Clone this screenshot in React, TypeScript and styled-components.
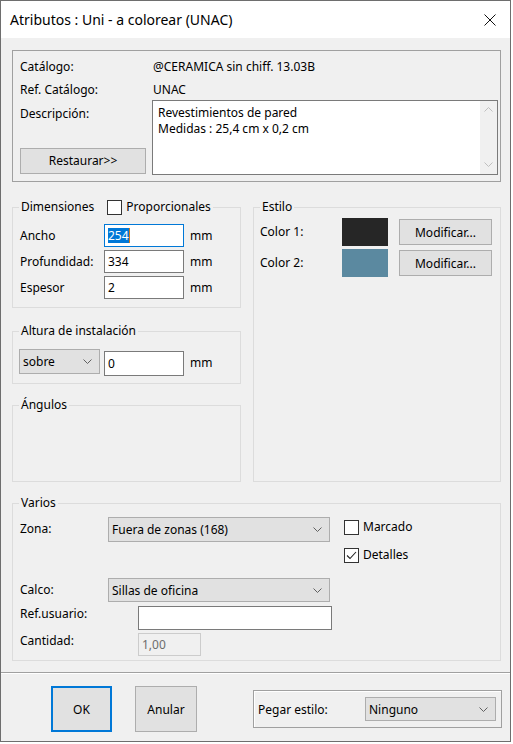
import styled, { createGlobalStyle } from "styled-components";

const GlobalStyle = createGlobalStyle`
  html, body { margin: 0; padding: 0; background: #ffffff; }
  body {
    font-family: "Segoe UI", "Noto Sans", "Open Sans", sans-serif;
    font-size: 12px;
    color: #000;
  }
  * { box-sizing: border-box; }
`;

const Chevron = ({ up }: { up?: boolean }) => (
  <svg width="9" height="5" viewBox="0 0 9 5">
    <path
      d={up ? "M0.5 4.5 L4.5 0.5 L8.5 4.5" : "M0.5 0.5 L4.5 4.5 L8.5 0.5"}
      fill="none"
      stroke="currentColor"
      strokeWidth="1"
    />
  </svg>
);

const CheckBox = ({ checked }: { checked?: boolean }) => (
  <Box>
    {checked && (
      <svg width="13" height="13" viewBox="0 0 13 13">
        <path d="M2 6.5 L5 9.5 L11 3" fill="none" stroke="#222" strokeWidth="1.1" />
      </svg>
    )}
  </Box>
);

const DropDown = ({ text, w, h }: { text: string; w: number; h: number }) => (
  <Select $w={w} $h={h}>
    <span>{text}</span>
    <Chevron />
  </Select>
);

export default function App() {
  return (
    <>
      <GlobalStyle />
      <Window>
        <TitleBar>
          <Title>Atributos : Uni - a colorear (UNAC)</Title>
          <svg width="12" height="12" viewBox="0 0 12 12">
            <path d="M0.5 0.5 L11.5 11.5 M11.5 0.5 L0.5 11.5" stroke="#111" strokeWidth="1" />
          </svg>
        </TitleBar>

        <Body>
          <InfoFrame>
            <InfoRow>
              <InfoLabel>Catálogo:</InfoLabel>
              <InfoValue>@CERAMICA sin chiff. 13.03B</InfoValue>
            </InfoRow>
            <InfoRow $gap={7}>
              <InfoLabel>Ref. Catálogo:</InfoLabel>
              <InfoValue>UNAC</InfoValue>
            </InfoRow>
            <DescRow>
              <DescLeft>
                <span>Descripción:</span>
                <Button $w={126} $h={26}>Restaurar&gt;&gt;</Button>
              </DescLeft>
              <TextArea>
                <TextContent>
                  Revestimientos de pared
                  <br />
                  Medidas : 25,4 cm x 0,2 cm
                </TextContent>
                <ScrollBar>
                  <Chevron up />
                  <Chevron />
                </ScrollBar>
              </TextArea>
            </DescRow>
          </InfoFrame>

          <Columns>
            <LeftColumn>
              <Group>
                <Legend>
                  Dimensiones
                  <LegendCheck>
                    <CheckBox />
                    <span>Proporcionales</span>
                  </LegendCheck>
                </Legend>
                <DimsContent>
                  <FieldRow>
                    <RowLabel $w={84}>Ancho</RowLabel>
                    <Field $w={80} $h={23} $focused>
                      <Selected>254</Selected>
                      <Caret />
                    </Field>
                    <Unit>mm</Unit>
                  </FieldRow>
                  <FieldRow>
                    <RowLabel $w={84}>Profundidad:</RowLabel>
                    <Field $w={80} $h={23}>334</Field>
                    <Unit>mm</Unit>
                  </FieldRow>
                  <FieldRow>
                    <RowLabel $w={84}>Espesor</RowLabel>
                    <Field $w={80} $h={23}>2</Field>
                    <Unit>mm</Unit>
                  </FieldRow>
                </DimsContent>
              </Group>

              <Group $top={15}>
                <Legend>Altura de instalación</Legend>
                <HeightContent>
                  <DropDown text="sobre" w={81} h={25} />
                  <HeightField $w={80} $h={25}>0</HeightField>
                  <Unit $top={6}>mm</Unit>
                </HeightContent>
              </Group>

              <Group $top={13} $height={85}>
                <Legend>Ángulos</Legend>
              </Group>
            </LeftColumn>

            <RightColumn>
              <Group $grow>
                <Legend>Estilo</Legend>
                <StyleContent>
                  <ColorRow>
                    <RowLabel $w={82}>Color 1:</RowLabel>
                    <Swatch $color="#262626" />
                    <Button $w={93} $h={26}>Modificar...</Button>
                  </ColorRow>
                  <ColorRow>
                    <RowLabel $w={82}>Color 2:</RowLabel>
                    <Swatch $color="#5b89a0" />
                    <Button $w={93} $h={26}>Modificar...</Button>
                  </ColorRow>
                </StyleContent>
              </Group>
            </RightColumn>
          </Columns>

          <Group $top={13}>
            <Legend>Varios</Legend>
            <MiscContent>
              <ZoneRow>
                <RowLabel $w={88}>Zona:</RowLabel>
                <DropDown text="Fuera de zonas (168)" w={222} h={25} />
                <Checks>
                  <CheckLine>
                    <CheckBox />
                    <span>Marcado</span>
                  </CheckLine>
                  <CheckLine>
                    <CheckBox checked />
                    <span>Detalles</span>
                  </CheckLine>
                </Checks>
              </ZoneRow>
              <MiscRow $top={15}>
                <RowLabel $w={88}>Calco:</RowLabel>
                <DropDown text="Sillas de oficina" w={222} h={24} />
              </MiscRow>
              <MiscRow $top={4} $start>
                <RowLabel $w={118}>Ref.usuario:</RowLabel>
                <Field $w={194} $h={24} />
              </MiscRow>
              <MiscRow $top={3} $start>
                <RowLabel $w={118}>Cantidad:</RowLabel>
                <Field $w={63} $h={23} $disabled>1,00</Field>
              </MiscRow>
            </MiscContent>
          </Group>
        </Body>

        <Footer>
          <Button $w={61} $h={46} $default>OK</Button>
          <Button $w={62} $h={46} $left={23}>Anular</Button>
          <PasteBox>
            <PasteLabel>Pegar estilo:</PasteLabel>
            <DropDown text="Ninguno" w={131} h={24} />
          </PasteBox>
        </Footer>
      </Window>
    </>
  );
}

const Window = styled.div`
  width: 511px;
  height: 742px;
  border: 1px solid #6e6e6e;
  background: #f0f0f0;
  display: flex;
  flex-direction: column;
`;

const TitleBar = styled.div`
  height: 37px;
  flex-shrink: 0;
  background: #ffffff;
  display: flex;
  align-items: center;
  justify-content: space-between;
  padding: 0 14px 0 9px;
`;

const Title = styled.div`
  font-size: 14px;
  color: #000;
`;

const Body = styled.div`
  padding: 12px 9px 0 11px;
  display: flex;
  flex-direction: column;
`;

const InfoFrame = styled.div`
  height: 132px;
  border: 1px solid #a0a0a0;
  padding: 8px 2px 6px 7px;
  display: flex;
  flex-direction: column;
`;

const InfoRow = styled.div<{ $gap?: number }>`
  display: flex;
  line-height: 16px;
  margin-top: ${({ $gap }) => $gap ?? 0}px;
`;

const InfoLabel = styled.div`
  width: 132px;
  flex-shrink: 0;
`;

const InfoValue = styled.div`
  padding-left: 1px;
`;

const DescRow = styled.div`
  display: flex;
  margin-top: 2px;
  height: 76px;
`;

const DescLeft = styled.div`
  width: 132px;
  flex-shrink: 0;
  display: flex;
  flex-direction: column;
  justify-content: space-between;
  align-items: flex-start;
  padding: 6px 0 1px 0;
  line-height: 16px;
`;

const TextArea = styled.div`
  flex: 1;
  display: flex;
  background: #ffffff;
  border: 1px solid #7a7a7a;
`;

const TextContent = styled.div`
  flex: 1;
  padding: 4px 5px;
  line-height: 16px;
`;

const ScrollBar = styled.div`
  width: 17px;
  background: #f0f0f0;
  display: flex;
  flex-direction: column;
  justify-content: space-between;
  align-items: center;
  padding: 6px 0 7px;
  color: #bfbfbf;
`;

const Button = styled.div<{ $w: number; $h: number; $default?: boolean; $left?: number }>`
  width: ${({ $w }) => $w}px;
  height: ${({ $h }) => $h}px;
  margin-left: ${({ $left }) => $left ?? 0}px;
  flex-shrink: 0;
  background: #e1e1e1;
  border: ${({ $default }) => ($default ? "2px solid #0078d7" : "1px solid #adadad")};
  display: flex;
  align-items: center;
  justify-content: center;
`;

const Columns = styled.div`
  display: flex;
  gap: 12px;
  margin-top: 17px;
`;

const LeftColumn = styled.div`
  width: 229px;
  flex-shrink: 0;
  display: flex;
  flex-direction: column;
`;

const RightColumn = styled.div`
  flex: 1;
  display: flex;
  flex-direction: column;
`;

const Group = styled.fieldset<{ $top?: number; $grow?: boolean; $height?: number }>`
  margin: ${({ $top }) => $top ?? 0}px 0 0 0;
  padding: 0;
  min-width: 0;
  border: 1px solid #dcdcdc;
  flex: ${({ $grow }) => ($grow ? 1 : "none")};
  height: ${({ $height }) => ($height ? `${$height}px` : "auto")};
`;

const Legend = styled.legend`
  margin-left: 6px;
  padding: 0 2px;
  line-height: 16px;
  display: flex;
  align-items: center;
`;

const LegendCheck = styled.span`
  display: flex;
  align-items: center;
  gap: 4px;
  margin-left: 13px;
`;

const Box = styled.span`
  width: 15px;
  height: 15px;
  flex-shrink: 0;
  border: 1px solid #333333;
  background: #ffffff;
  display: inline-flex;
`;

const DimsContent = styled.div`
  padding: 9px 0 8px 7px;
  display: flex;
  flex-direction: column;
  gap: 3px;
`;

const FieldRow = styled.div`
  display: flex;
  align-items: center;
`;

const RowLabel = styled.div<{ $w: number }>`
  width: ${({ $w }) => $w}px;
  flex-shrink: 0;
  line-height: 16px;
`;

const Field = styled.div<{ $w: number; $h: number; $focused?: boolean; $disabled?: boolean }>`
  width: ${({ $w }) => $w}px;
  height: ${({ $h }) => $h}px;
  flex-shrink: 0;
  display: flex;
  align-items: center;
  padding: 0 3px;
  background: ${({ $disabled }) => ($disabled ? "#f0f0f0" : "#ffffff")};
  color: ${({ $disabled }) => ($disabled ? "#6d6d6d" : "#000")};
  border: 1px solid
    ${({ $focused, $disabled }) => ($focused ? "#0078d7" : $disabled ? "#cccccc" : "#7a7a7a")};
`;

const Selected = styled.span`
  background: #0078d7;
  color: #ffffff;
  line-height: 15px;
`;

const Caret = styled.span`
  width: 1px;
  height: 15px;
  background: #d27a1a;
`;

const Unit = styled.span<{ $top?: number }>`
  margin-left: 6px;
  margin-top: ${({ $top }) => $top ?? 0}px;
  line-height: 16px;
`;

const HeightContent = styled.div`
  padding: 10px 0 7px 6px;
  display: flex;
  align-items: flex-start;
`;

const HeightField = styled(Field)`
  margin: 2px 0 0 4px;
`;

const Select = styled.div<{ $w: number; $h: number }>`
  width: ${({ $w }) => $w}px;
  height: ${({ $h }) => $h}px;
  flex-shrink: 0;
  background: #e1e1e1;
  border: 1px solid #adadad;
  display: flex;
  align-items: center;
  justify-content: space-between;
  padding: 0 7px 0 3px;
  color: #000;

  svg {
    color: #606060;
  }
`;

const StyleContent = styled.div`
  padding: 3px 0 0 6px;
  display: flex;
  flex-direction: column;
  gap: 3px;
`;

const ColorRow = styled.div`
  display: flex;
  align-items: center;
  height: 28px;
`;

const Swatch = styled.div<{ $color: string }>`
  width: 46px;
  height: 28px;
  margin-right: 11px;
  flex-shrink: 0;
  background: ${({ $color }) => $color};
`;

const MiscContent = styled.div`
  padding: 6px 0 4px 7px;
  display: flex;
  flex-direction: column;
`;

const ZoneRow = styled.div`
  display: flex;
  align-items: flex-start;
  line-height: 16px;

  > ${RowLabel} {
    margin-top: 4px;
  }
`;

const Checks = styled.div`
  margin: 2px 0 0 14px;
  display: flex;
  flex-direction: column;
  gap: 12px;
`;

const CheckLine = styled.div`
  display: flex;
  align-items: center;
  gap: 4px;
`;

const MiscRow = styled.div<{ $top: number; $start?: boolean }>`
  display: flex;
  align-items: ${({ $start }) => ($start ? "flex-start" : "center")};
  margin-top: ${({ $top }) => $top}px;
`;

const Footer = styled.div`
  flex: 1;
  margin-top: 11px;
  border-top: 1px solid #a0a0a0;
  box-shadow: inset 0 1px 0 #ffffff;
  display: flex;
  align-items: flex-start;
  padding: 13px 0 0 50px;
`;

const PasteBox = styled.div`
  width: 249px;
  height: 38px;
  margin: 4px 0 0 56px;
  border: 1px solid #a0a0a0;
  box-shadow: inset 1px 1px 0 #ffffff;
  display: flex;
  align-items: flex-start;
  padding: 6px 0 0 4px;
`;

const PasteLabel = styled.div`
  width: 107px;
  flex-shrink: 0;
  margin-top: 5px;
  line-height: 16px;
`;
